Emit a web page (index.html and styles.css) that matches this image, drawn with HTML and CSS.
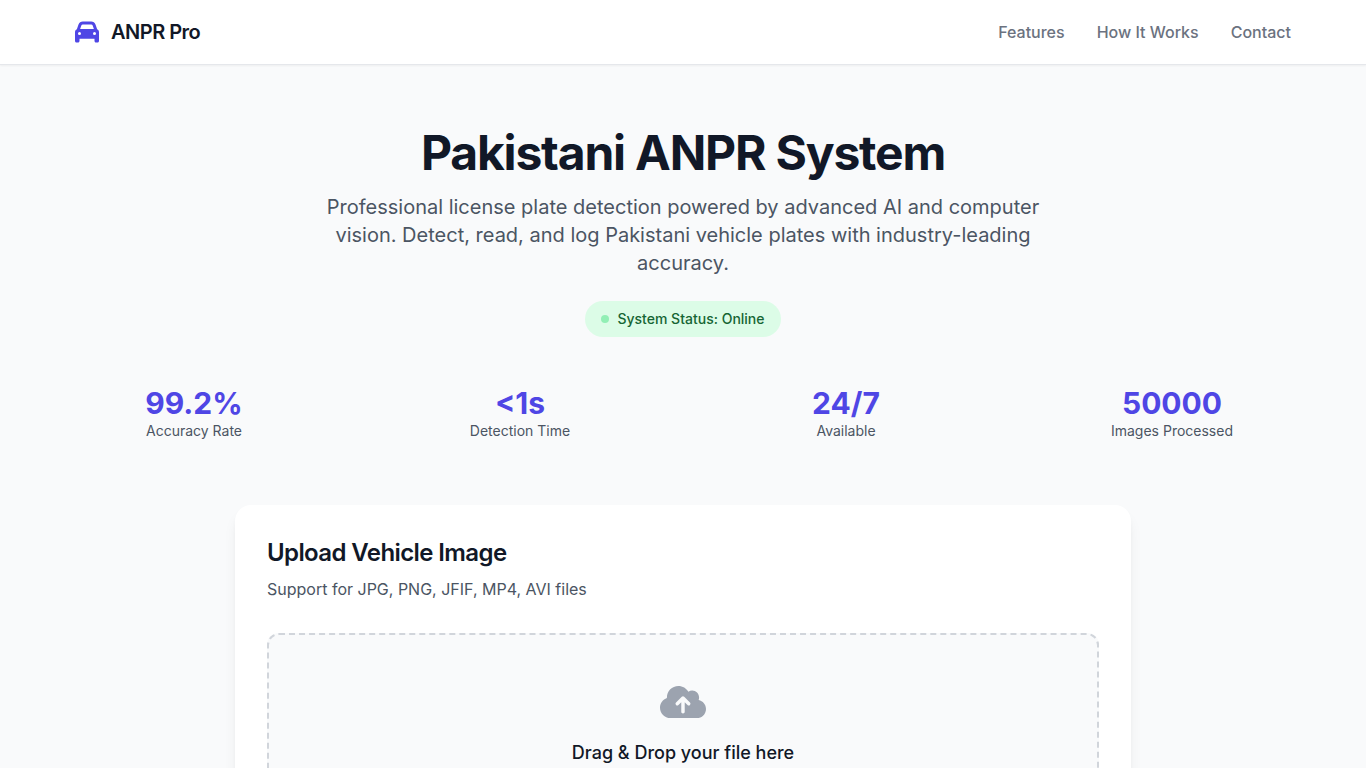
FILE: index.html
```
<!DOCTYPE html>
<html lang="en">
<head>
  <meta charset="UTF-8">
  <meta name="viewport" content="width=device-width, initial-scale=1.0">
  <title>Pakistani ANPR System</title>
  <link rel="stylesheet" href="styles.css">
</head>
<body>
  <header class="header">
    <div class="header-inner">
      <a href="#" class="logo">
        <svg class="logo-icon" viewBox="0 0 512 512" aria-hidden="true"><path d="M135.2 117.4L109.1 192H402.9l-26.1-74.6C372.3 104.6 360.2 96 346.6 96H165.4c-13.6 0-25.7 8.6-30.2 21.4zM39.6 196.8L74.8 96.3C88.3 57.8 124.6 32 165.4 32H346.6c40.8 0 77.1 25.8 90.6 64.3l35.2 100.5c23.2 9.6 39.6 32.5 39.6 59.2V400v48c0 17.7-14.3 32-32 32H448c-17.7 0-32-14.3-32-32V400H96v48c0 17.7-14.3 32-32 32H32c-17.7 0-32-14.3-32-32V400 256c0-26.7 16.4-49.6 39.6-59.2zM128 288a32 32 0 1 0 -64 0 32 32 0 1 0 64 0zm288 32a32 32 0 1 0 0-64 32 32 0 1 0 0 64z"/></svg>
        <span>ANPR Pro</span>
      </a>
      <nav class="nav">
        <a href="#features">Features</a>
        <a href="#how-it-works">How It Works</a>
        <a href="#contact">Contact</a>
      </nav>
    </div>
  </header>

  <main class="main">
    <section class="hero">
      <h1>Pakistani ANPR System</h1>
      <p class="hero-text">Professional license plate detection powered by advanced AI and computer vision. Detect, read, and log Pakistani vehicle plates with industry-leading accuracy.</p>
      <div class="status">
        <span class="status-dot"></span>
        <span>System Status: Online</span>
      </div>
    </section>

    <section class="stats">
      <div class="stat">
        <div class="stat-value">99.2%</div>
        <div class="stat-label">Accuracy Rate</div>
      </div>
      <div class="stat">
        <div class="stat-value">&lt;1s</div>
        <div class="stat-label">Detection Time</div>
      </div>
      <div class="stat">
        <div class="stat-value">24/7</div>
        <div class="stat-label">Available</div>
      </div>
      <div class="stat">
        <div class="stat-value">50000</div>
        <div class="stat-label">Images Processed</div>
      </div>
    </section>

    <section class="card">
      <h2>Upload Vehicle Image</h2>
      <p class="card-text">Support for JPG, PNG, JFIF, MP4, AVI files</p>
      <label class="dropzone" for="file">
        <svg class="upload-icon" viewBox="0 0 640 512" aria-hidden="true"><path d="M144 480C64.5 480 0 415.5 0 336c0-62.8 40.2-116.2 96.2-135.9c-.1-2.7-.2-5.4-.2-8.1c0-88.4 71.6-160 160-160c59.3 0 111 32.2 138.7 80.2C409.9 102 428.3 96 448 96c53 0 96 43 96 96c0 12.2-2.3 23.8-6.4 34.6C596 238.4 640 290.1 640 352c0 70.7-57.3 128-128 128H144zm79-217c-9.4 9.4-9.4 24.6 0 33.9s24.6 9.4 33.9 0l39-39V392c0 13.3 10.7 24 24 24s24-10.7 24-24V257.9l39 39c9.4 9.4 24.6 9.4 33.9 0s9.4-24.6 0-33.9l-80-80c-9.4-9.4-24.6-9.4-33.9 0l-80 80z"/></svg>
        <span class="dropzone-title">Drag &amp; Drop your file here</span>
        <input type="file" id="file" accept=".jpg,.png,.jfif,.mp4,.avi" hidden>
      </label>
    </section>
  </main>
</body>
</html>
```
FILE: styles.css
```
* {
  box-sizing: border-box;
}
body {
  margin: 0;
  background: #f9fafb;
  color: #111827;
  font-family: Inter, "Liberation Sans", sans-serif;
  font-size: 16px;
  line-height: 24px;
}
h1, h2, p {
  margin: 0;
}
a {
  color: inherit;
  text-decoration: none;
}

/* header */
.header {
  background: #fff;
  border-bottom: 1px solid #e5e7eb;
  box-shadow: 0 1px 2px rgba(0, 0, 0, 0.05);
}
.header-inner {
  max-width: 1280px;
  height: 64px;
  margin: 0 auto;
  padding: 0 32px;
  display: flex;
  align-items: center;
  justify-content: space-between;
}
.logo {
  display: flex;
  align-items: center;
  gap: 12px;
  font-size: 20px;
  line-height: 28px;
  font-weight: 600;
  letter-spacing: -0.025em;
}
.logo-icon {
  width: 24px;
  height: 24px;
  fill: #4f46e5;
}
.nav {
  display: flex;
  gap: 32px;
  color: #6b7280;
  font-weight: 500;
}
.nav a:hover {
  color: #4f46e5;
}

/* hero */
.main {
  max-width: 1280px;
  margin: 0 auto;
  padding: 64px 0;
}
.hero {
  padding: 0 32px;
  text-align: center;
}
.hero h1 {
  margin-bottom: 16px;
  font-size: 48px;
  line-height: 48px;
  font-weight: 700;
  letter-spacing: -0.025em;
}
.hero-text {
  max-width: 768px;
  margin: 0 auto 24px;
  color: #4b5563;
  font-size: 20px;
  line-height: 28px;
}
.status {
  display: inline-flex;
  align-items: center;
  gap: 8px;
  padding: 8px 16px;
  border-radius: 18px;
  background: #dcfce7;
  color: #166534;
  font-size: 14px;
  line-height: 20px;
  font-weight: 500;
  vertical-align: top;
}
.status-dot {
  width: 8px;
  height: 8px;
  border-radius: 50%;
  background: #92efb5;
}

/* stats */
.stats {
  display: grid;
  grid-template-columns: repeat(4, 1fr);
  gap: 24px;
  margin: 48px 0 64px;
  text-align: center;
}
.stat-value {
  color: #4f46e5;
  font-size: 30px;
  line-height: 36px;
  font-weight: 700;
}
.stat-label {
  color: #4b5563;
  font-size: 14px;
  line-height: 20px;
}

/* upload card */
.card {
  max-width: 896px;
  margin: 0 auto;
  padding: 32px;
  border-radius: 16px;
  background: #fff;
  box-shadow: 0 10px 15px -3px rgba(0, 0, 0, 0.08), 0 4px 6px -2px rgba(0, 0, 0, 0.04);
}
.card h2 {
  margin-bottom: 8px;
  font-size: 24px;
  line-height: 32px;
  font-weight: 600;
  letter-spacing: -0.025em;
}
.card-text {
  margin-bottom: 32px;
  color: #4b5563;
}
.dropzone {
  display: flex;
  flex-direction: column;
  align-items: center;
  padding: 48px;
  border: 2px dashed #d1d5db;
  border-radius: 12px;
  background: #f9fafb;
  cursor: pointer;
}
.upload-icon {
  width: 46px;
  height: 38px;
  margin-bottom: 18px;
  fill: #9ca3af;
}
.dropzone-title {
  font-size: 18px;
  line-height: 28px;
  font-weight: 500;
}

@media (max-width: 900px) {
  .main { padding: 48px 16px; }
  .hero { padding: 0; }
  .hero h1 { font-size: 36px; line-height: 40px; }
  .stats { grid-template-columns: repeat(2, 1fr); }
}
```
